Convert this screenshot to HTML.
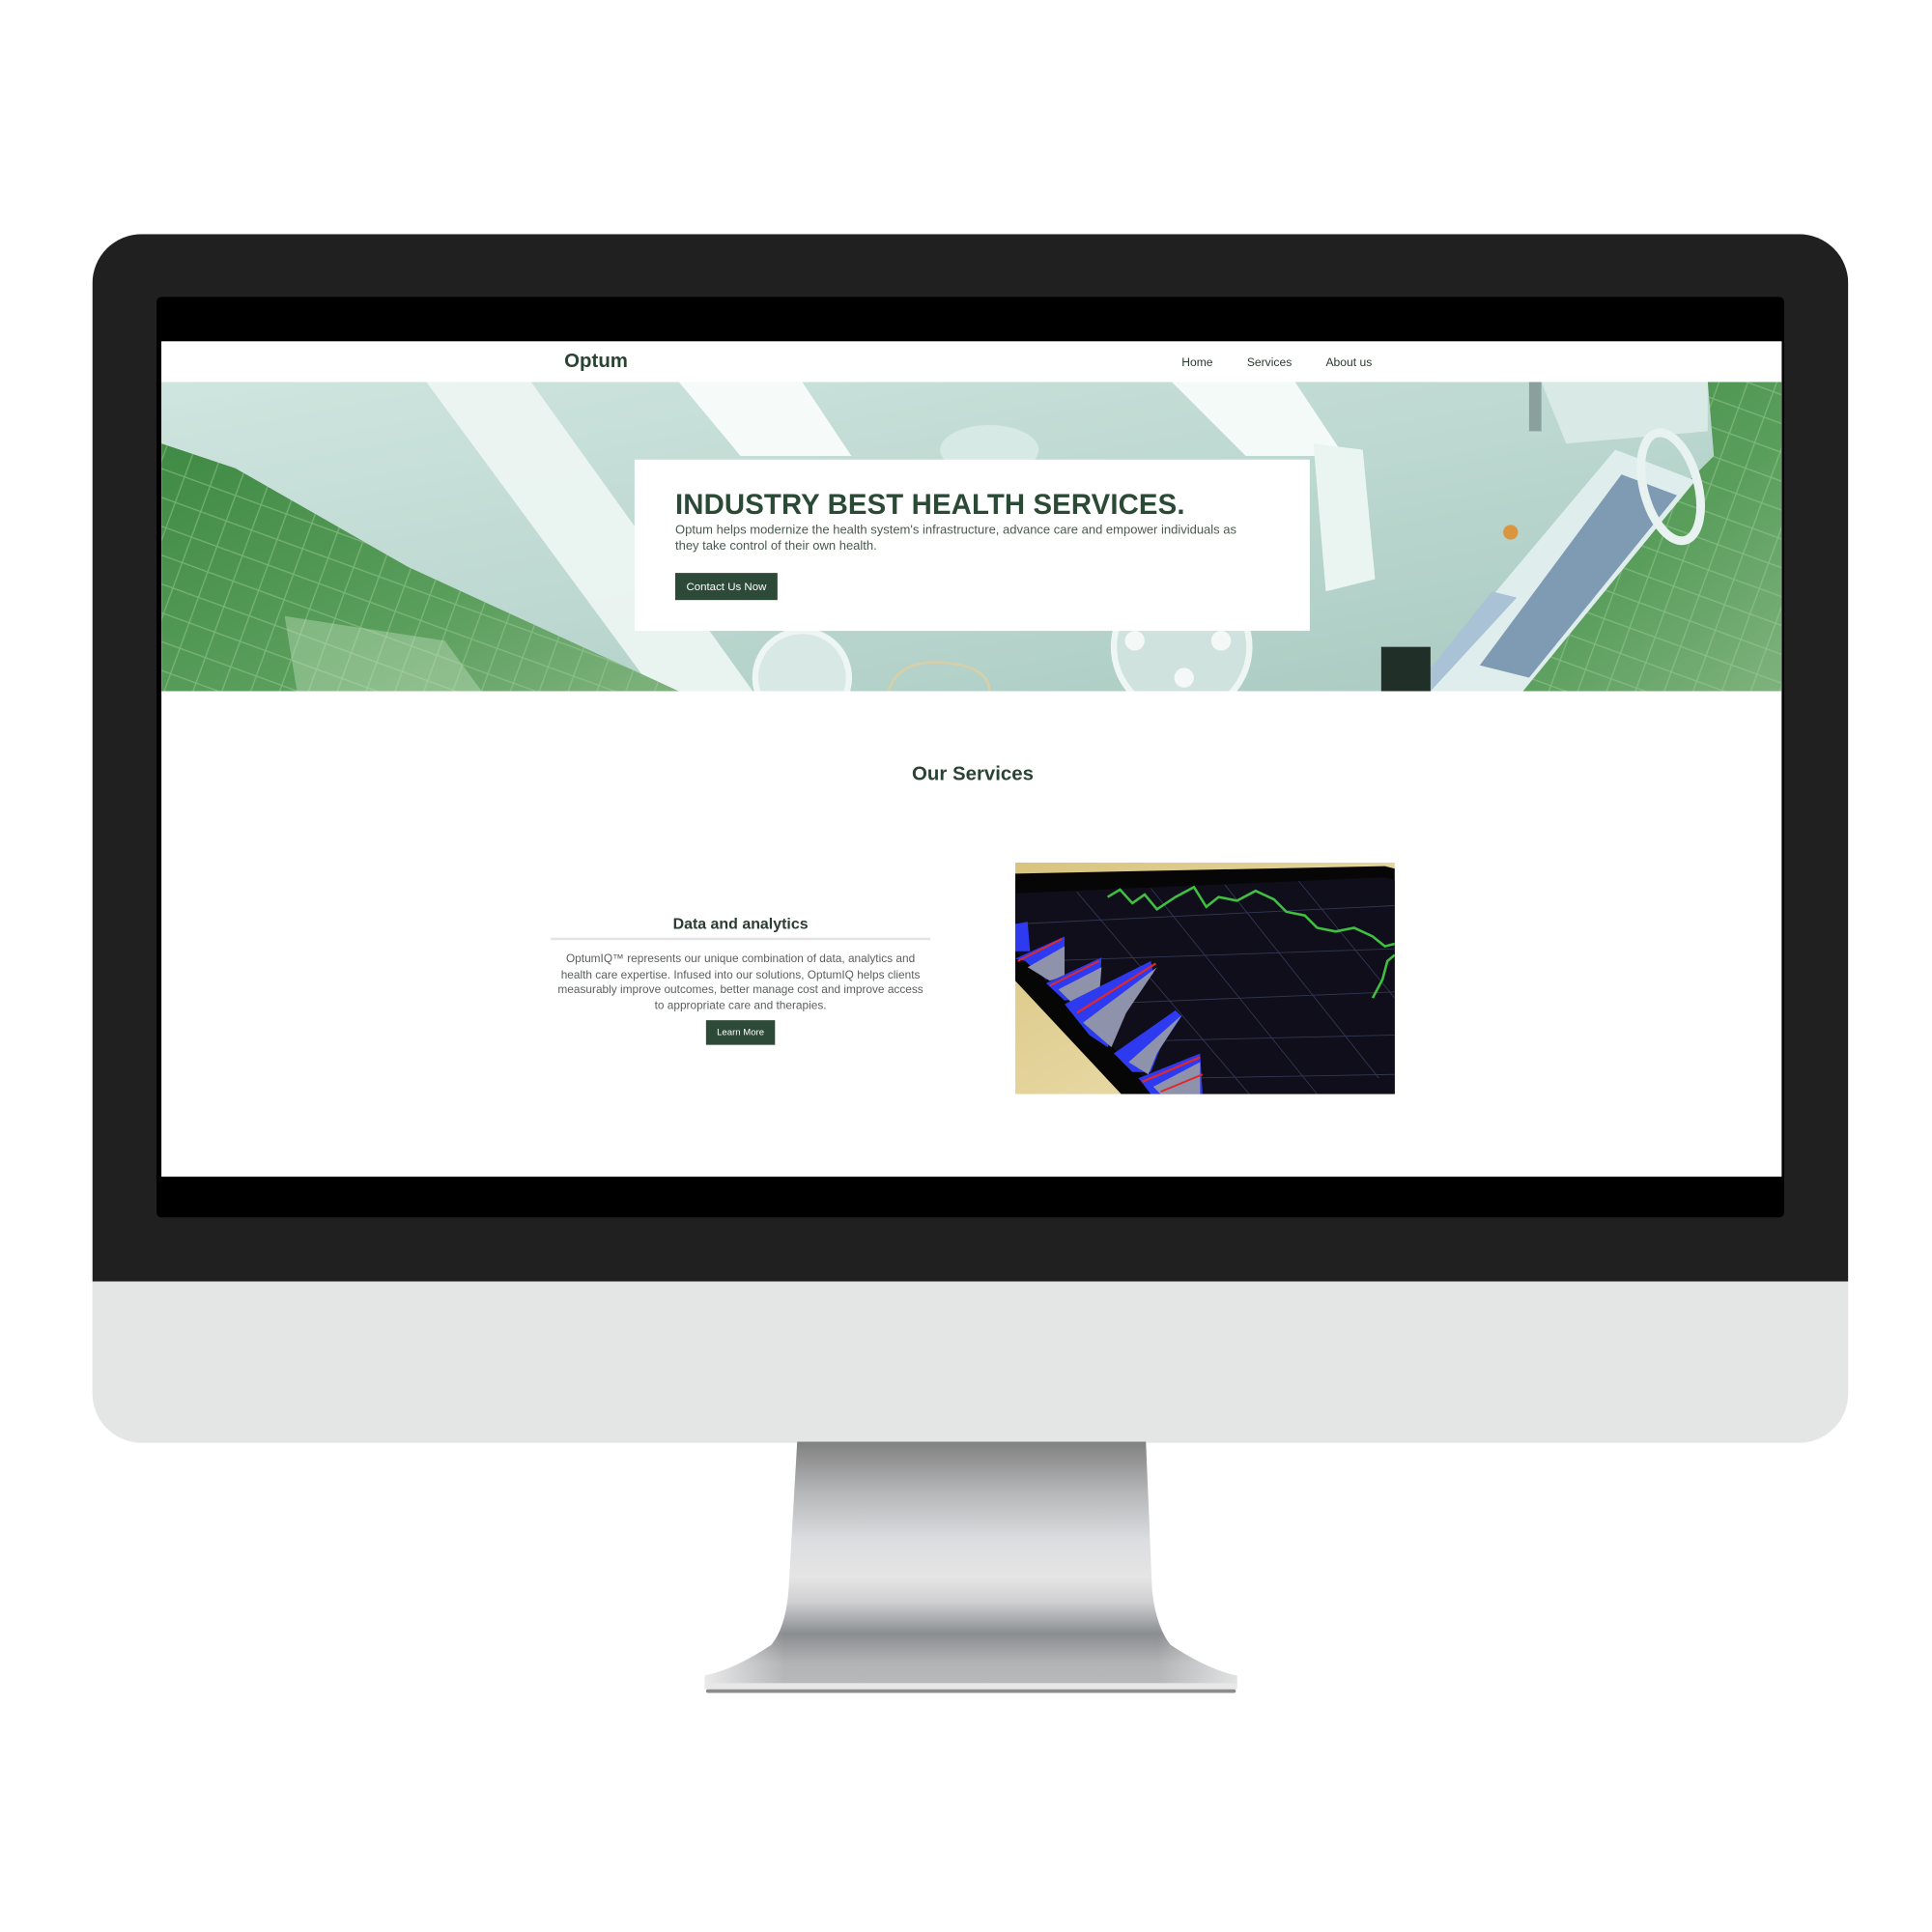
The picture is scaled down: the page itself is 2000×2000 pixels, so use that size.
<!DOCTYPE html>
<html><head><meta charset="utf-8">
<style>
*{margin:0;padding:0;box-sizing:border-box}
html,body{width:2000px;height:2000px;background:#fff;overflow:hidden;font-family:"Liberation Sans",Arial,sans-serif}
#w{position:absolute;left:0;top:0;width:1568px;height:1568px;transform:scale(1.27551);transform-origin:0 0}
.abs{position:absolute}
#body{left:75px;top:190px;width:1425px;height:981px;border-radius:40px;background:#e4e6e5;overflow:hidden}
#dark{left:0;top:0;width:1425px;height:850px;background:#202020}
#screen{left:127px;top:241px;width:1321px;height:747px;background:#000;border-radius:4px}
#page{left:131px;top:277px;width:1315px;height:678px;background:#fff;overflow:hidden}
.nav{left:0;top:0;width:1315px;height:33px;background:#fff}
.logo{left:327px;top:8px;font-size:16px;font-weight:bold;color:#2a4433}
.nl{top:12px;font-size:9.5px;color:#2c3a30}
#hero{left:0;top:33px;width:1315px;height:251px}
.card{left:384px;top:96px;width:548px;height:139px;background:#fff}
.card h1{position:absolute;left:33px;top:23px;font-size:23px;font-weight:bold;color:#2b4a35;white-space:nowrap;letter-spacing:0.1px}
.card p{position:absolute;left:33px;top:52px;width:462px;font-size:10.2px;line-height:12.5px;color:#4a5a50}
.btn{background:#2d4a38;color:#fff;text-align:center}
</style></head><body>
<div id="w">
  <div id="body" class="abs"><div id="dark" class="abs"></div></div>
  <svg class="abs" style="left:560px;top:1170px" width="460" height="210" viewBox="0 0 460 210">
    <defs>
      <linearGradient id="sg" x1="0" y1="0" x2="0" y2="1">
        <stop offset="0" stop-color="#808080"/>
        <stop offset="0.2" stop-color="#b4b5b7"/>
        <stop offset="0.4" stop-color="#dcdde0"/>
        <stop offset="0.55" stop-color="#e5e5e5"/>
        <stop offset="0.65" stop-color="#d0d0d2"/>
        <stop offset="0.78" stop-color="#8a8d90"/>
        <stop offset="0.9" stop-color="#b3b4b6"/>
        <stop offset="1" stop-color="#b8b9bb"/>
      </linearGradient>
      <linearGradient id="sh" x1="0" y1="0" x2="1" y2="0">
        <stop offset="0" stop-color="#fff" stop-opacity="0.7"/>
        <stop offset="0.15" stop-color="#fff" stop-opacity="0"/>
        <stop offset="0.85" stop-color="#fff" stop-opacity="0"/>
        <stop offset="1" stop-color="#fff" stop-opacity="0.6"/>
      </linearGradient>
    </defs>
    <path d="M87 0 L370 0 L375 120 Q378 150 390 165 Q420 185 444 190 L444 200 L12 200 L12 190 Q36 185 66 165 Q78 150 80 120 Z" fill="url(#sg)"/>
    <path d="M87 0 L370 0 L375 120 Q378 150 390 165 Q420 185 444 190 L444 200 L12 200 L12 190 Q36 185 66 165 Q78 150 80 120 Z" fill="url(#sh)"/>
    <rect x="12" y="196" width="432" height="5" fill="#e8e8e8"/>
    <rect x="13" y="201" width="430" height="3" rx="1.5" fill="#8b8b8b"/>
  </svg>
  <div id="screen" class="abs"></div>
  <div id="page" class="abs">
    <div class="nav abs">
      <div class="logo abs">Optum</div>
      <div class="nl abs" style="left:828px">Home</div>
      <div class="nl abs" style="left:881px">Services</div>
      <div class="nl abs" style="left:945px">About us</div>
    </div>
    <svg id="hero" class="abs" width="1315" height="251" viewBox="0 0 1315 251">
      <defs>
        <linearGradient id="ceil" x1="0" y1="0" x2="1" y2="1">
          <stop offset="0" stop-color="#cfe5df"/>
          <stop offset="0.5" stop-color="#bcd8d0"/>
          <stop offset="1" stop-color="#a7c9bf"/>
        </linearGradient>
        <linearGradient id="gr" x1="0" y1="0" x2="1" y2="1">
          <stop offset="0" stop-color="#3f8a44"/>
          <stop offset="0.6" stop-color="#5a9e5c"/>
          <stop offset="1" stop-color="#7fb27e"/>
        </linearGradient>
        <pattern id="tile" width="22" height="22" patternUnits="userSpaceOnUse" patternTransform="rotate(20)">
          <rect width="22" height="22" fill="none" stroke="#9fd09c" stroke-width="1" stroke-opacity="0.5"/>
        </pattern>
      </defs>
      <rect width="1315" height="251" fill="url(#ceil)"/>
      <polygon points="215,0 300,0 480,251 400,251" fill="#eef6f3" opacity="0.9"/>
      <polygon points="420,0 520,0 560,60 470,60" fill="#f6fbf9"/>
      <polygon points="820,0 920,0 960,60 880,60" fill="#f4faf8"/>
      <polygon points="935,50 975,55 985,160 945,170" fill="#eaf5f2"/>
      <ellipse cx="672" cy="55" rx="40" ry="20" fill="#d6e9e4"/>
      <polygon points="0,50 60,70 200,150 420,251 0,251" fill="url(#gr)"/>
      <polygon points="0,50 60,70 200,150 420,251 0,251" fill="url(#tile)"/>
      <polygon points="100,190 230,210 260,251 110,251" fill="#c8e4c4" opacity="0.4"/>
      <polygon points="1255,0 1315,0 1315,251 1020,251 1060,200 1200,120 1260,60" fill="url(#gr)"/>
      <polygon points="1255,0 1315,0 1315,251 1020,251 1060,200 1200,120 1260,60" fill="url(#tile)"/>
      <polygon points="1120,0 1255,0 1255,40 1140,50" fill="#d9e9e6"/>
      <rect x="1110" y="0" width="10" height="40" fill="#8aa09c"/>
      <polygon points="1180,55 1245,80 1105,251 1015,251" fill="#dfeeed"/>
      <polygon points="1185,75 1230,92 1110,240 1070,230" fill="#7f9bb4"/>
      <polygon points="1080,170 1100,175 1030,251 1015,251" fill="#a9c2d6"/>
      <ellipse cx="1225" cy="85" rx="22" ry="45" fill="none" stroke="#e8f2f0" stroke-width="7" transform="rotate(-15 1225 85)"/>
      <circle cx="1095" cy="122" r="6" fill="#d99540"/>
      <rect x="990" y="215" width="40" height="36" fill="#203028"/>
      <circle cx="520" cy="240" r="38" fill="#d8e8e4" stroke="#eef6f4" stroke-width="5"/>
      <circle cx="828" cy="215" r="55" fill="#cfe2de" stroke="#eef6f4" stroke-width="5"/>
      <circle cx="790" cy="210" r="8" fill="#f4f9f8"/><circle cx="830" cy="240" r="8" fill="#f4f9f8"/><circle cx="860" cy="210" r="8" fill="#f4f9f8"/>
      <path d="M590 251 Q600 220 650 230 Q672 236 672 251" fill="none" stroke="#d7cfa8" stroke-width="2"/>
    </svg>
    <div class="card abs">
      <h1>INDUSTRY BEST HEALTH SERVICES.</h1>
      <p>Optum helps modernize the health system's infrastructure, advance care and empower individuals as they take control of their own health.</p>
      <div class="btn abs" style="left:33px;top:92px;width:83px;height:22px;font-size:9px;line-height:22px">Contact Us Now</div>
    </div>
    <div class="abs" style="left:0;top:343px;width:1317px;text-align:center;font-size:16px;font-weight:bold;color:#2a4433">Our Services</div>
    <div class="abs" style="left:316px;top:466px;width:308px;text-align:center;font-size:12.5px;font-weight:bold;color:#2a3d30">Data and analytics</div>
    <div class="abs" style="left:316px;top:484px;width:308px;height:2px;background:#e4e4e4"></div>
    <div class="abs" style="left:318px;top:495px;width:304px;text-align:center;font-size:9.3px;line-height:12.6px;color:#5a5f5c">OptumIQ™ represents our unique combination of data, analytics and health care expertise. Infused into our solutions, OptumIQ helps clients measurably improve outcomes, better manage cost and improve access to appropriate care and therapies.</div>
    <div class="btn abs" style="left:442px;top:551px;width:56px;height:20px;font-size:7.5px;line-height:20px">Learn More</div>
    <svg class="abs" style="left:693px;top:423px" width="308" height="188" viewBox="0 0 308 188">
      <defs>
        <linearGradient id="bg2" x1="0" y1="0" x2="1" y2="1">
          <stop offset="0" stop-color="#d9c47e"/><stop offset="1" stop-color="#eee3b8"/>
        </linearGradient>
      </defs>
      <rect width="308" height="188" fill="url(#bg2)"/>
      <polygon points="0,9 300,3 308,5 308,188 86,188 0,96" fill="#060606"/>
      <polygon points="0,25 300,12 308,14 308,188 118,188 0,72" fill="#0f0e1a"/>
      <g stroke="#39405e" stroke-width="0.7" opacity="0.85">
        <line x1="50" y1="24" x2="190" y2="188"/><line x1="110" y1="21" x2="245" y2="188"/><line x1="170" y1="18" x2="295" y2="175"/><line x1="230" y1="15" x2="308" y2="110"/>
        <line x1="0" y1="50" x2="308" y2="35"/><line x1="20" y1="80" x2="308" y2="70"/><line x1="60" y1="115" x2="308" y2="105"/><line x1="100" y1="145" x2="308" y2="140"/><line x1="140" y1="175" x2="308" y2="172"/>
      </g>
      <polyline points="75,28 85,22 95,33 105,26 115,38 130,28 145,20 155,36 165,28 180,31 195,23 210,30 220,40 235,43 245,53 260,56 275,53 290,60 300,68 308,66" fill="none" stroke="#3fc040" stroke-width="2"/>
      <polyline points="290,110 298,95 302,80 308,75" fill="none" stroke="#3fc040" stroke-width="2"/>
      <g>
        <polygon points="0,50 10,48 12,72 0,72" fill="#2e3af0"/>
        <polygon points="0,78 40,60 40,90 25,95 8,80" fill="#2e3af0"/>
        <polygon points="10,85 40,68 40,92 28,96" fill="#8e93ab"/>
        <line x1="2" y1="80" x2="38" y2="62" stroke="#e0282a" stroke-width="1.6"/>
        <polygon points="25,98 70,77 68,108 40,112" fill="#2e3af0"/>
        <polygon points="35,103 70,85 68,110 45,113" fill="#8e93ab"/>
        <line x1="28" y1="100" x2="68" y2="80" stroke="#e0282a" stroke-width="1.6"/>
        <polygon points="40,115 110,80 112,90 85,120 75,150 60,140" fill="#2e3af0"/>
        <polygon points="55,130 115,85 90,122 78,150" fill="#8e93ab"/>
        <line x1="50" y1="122" x2="114" y2="82" stroke="#e0282a" stroke-width="1.8"/>
        <polygon points="80,155 130,120 135,125 118,150 110,170 95,170" fill="#2e3af0"/>
        <polygon points="92,162 135,124 115,155 108,172" fill="#8e93ab"/>
        <polygon points="100,175 150,155 152,188 110,188" fill="#2e3af0"/>
        <polygon points="112,182 150,162 150,188 118,188" fill="#8e93ab"/>
        <line x1="103" y1="178" x2="150" y2="158" stroke="#e0282a" stroke-width="1.8"/>
        <line x1="118" y1="186" x2="152" y2="172" stroke="#e0282a" stroke-width="1.5"/>
      </g>
    </svg>
  </div>
</div>
</body></html>
